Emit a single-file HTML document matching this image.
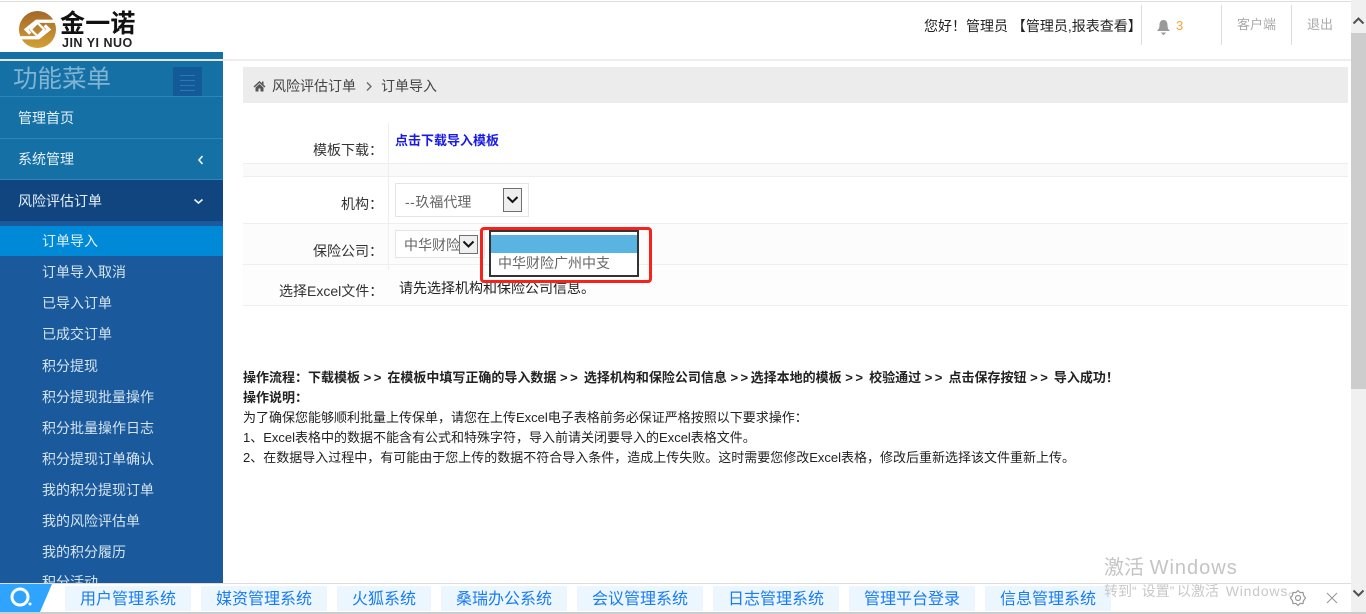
<!DOCTYPE html>
<html lang="zh"><head><meta charset="utf-8"><title>订单导入</title>
<style>
html,body{margin:0;padding:0;width:1366px;height:614px;overflow:hidden;background:#fff}
body{position:relative;font-family:"Liberation Sans","Noto Sans CJK SC",sans-serif;font-size:14px;color:#222}
.a{position:absolute;white-space:nowrap}
.t{position:absolute;white-space:nowrap;line-height:20px}
.m{position:absolute;left:18px;color:#e6f2fa;line-height:20px;white-space:nowrap}
.s{position:absolute;left:42px;color:#d5e4f1;line-height:20px;white-space:nowrap}
.l{position:absolute;background:#eee}
.tab{position:absolute;top:586px;height:25px;background:#ecf6ff;color:#1a7cf0;font-size:16px;line-height:28px;text-align:center;white-space:nowrap;overflow:hidden}
.d{font-size:13px;color:#222;left:243px;line-height:20px;position:absolute;white-space:nowrap}
.g{letter-spacing:2.500px}
.x{letter-spacing:.5px}
.sel{position:absolute;border:1px solid #e5e5e5;background:#fff;color:#666;line-height:20px;white-space:nowrap;box-sizing:border-box}
.btn{position:absolute;box-sizing:border-box;border:1px solid #707070;background:#efefef}
</style></head><body>
<div class="l" style="left:0;top:1px;width:1366px;height:1px;background:#ddd"></div>
<!-- logo -->
<svg class="a" style="left:19px;top:11px" width="37" height="37" viewBox="0 0 36 36">
<defs><linearGradient id="lg" x1="0" y1="0" x2="0" y2="1"><stop offset="0" stop-color="#a4672a"/><stop offset="1" stop-color="#d3a035"/></linearGradient></defs>
<circle cx="18" cy="18" r="18" fill="url(#lg)"/>
<path d="M36 10H17L7 18L11 22" fill="none" stroke="#fff" stroke-width="3.200"/>
<path d="M0 26H19L29 18L25 14" fill="none" stroke="#fff" stroke-width="3.200"/>
<path d="M18 11.500L24.500 18L18 24.500L11.500 18Z" fill="none" stroke="#fff" stroke-width="2.200"/>
<path d="M18 15.500L20.500 18L18 20.500L15.500 18Z" fill="#bb8430"/>
</svg>
<div class="a" style="left:60px;top:6px;font-size:25px;font-weight:700;color:#111;line-height:36px;letter-spacing:.2px">金一诺</div>
<div class="a" style="left:62px;top:37px;font-size:12.500px;font-weight:700;color:#222;line-height:12px;letter-spacing:.5px">JIN YI NUO</div>
<!-- header right -->
<div class="t" style="left:924px;top:16px;font-size:14px;color:#222">您好！管理员 【管理员,报表查看】</div>
<div class="l" style="left:1141px;top:5px;width:1px;height:40px;background:#ddd"></div>
<div class="l" style="left:1221px;top:5px;width:1px;height:40px;background:#ddd"></div>
<div class="l" style="left:1291px;top:5px;width:1px;height:40px;background:#ddd"></div>
<svg class="a" style="left:1156px;top:19px" width="15" height="17" viewBox="0 0 15 17"><path d="M7.500 1C4.500 1 3.500 3.500 3.500 6C3.500 9 2.500 10.500 1 12H14C12.500 10.500 11.500 9 11.500 6C11.500 3.500 10.500 1 7.500 1Z" fill="#999"/><path d="M6 14H9L7.500 15.500Z" fill="#999" stroke="#999"/></svg>
<div class="t" style="left:1176px;top:16px;color:#f9a23b;font-size:13px">3</div>
<div class="t" style="left:1237px;top:15px;color:#aaa;font-size:13px">客户端</div>
<div class="t" style="left:1307px;top:15px;color:#aaa;font-size:13px">退出</div>
<div class="l" style="left:223px;top:59px;width:1128px;height:2px;background:#eee"></div>
<!-- sidebar -->
<div class="a" style="left:0;top:52px;width:223px;height:7px;background:#1570a6"></div>
<div class="a" style="left:0;top:59px;width:223px;height:2px;background:#e8e8e8"></div>
<div class="a" style="left:0;top:61px;width:223px;height:118px;background:#1570a6"></div>
<div class="a" style="left:13px;top:62px;font-size:24.500px;line-height:36px;color:#7fb4d2">功能菜单</div>
<div class="a" style="left:173px;top:67px;width:29px;height:29px;background:#125a98"></div>
<div class="a" style="left:180px;top:75px;width:15px;height:1px;background:#2a78b4;box-shadow:0 5px 0 #2a78b4,0 10px 0 #2a78b4,0 15px 0 #2a78b4"></div>
<div class="a" style="left:0;top:96px;width:223px;height:1px;background:#2a86bd"></div>
<div class="m" style="top:108px">管理首页</div>
<div class="a" style="left:0;top:138px;width:223px;height:1px;background:#2a86bd"></div>
<div class="m" style="top:149px">系统管理</div>
<svg class="a" style="left:196px;top:154px" width="9" height="12" viewBox="0 0 9 12"><path d="M6.500 2L3 6L6.500 10" fill="none" stroke="#e8f2f8" stroke-width="1.700"/></svg>
<div class="a" style="left:0;top:179px;width:223px;height:1px;background:#2a86bd"></div>
<div class="a" style="left:0;top:180px;width:223px;height:41px;background:#10457f"></div>
<div class="m" style="top:191px">风险评估订单</div>
<svg class="a" style="left:192px;top:197px" width="13" height="9" viewBox="0 0 13 9"><path d="M2.500 2.500L6.500 6L10.500 2.500" fill="none" stroke="#e8f2f8" stroke-width="1.700"/></svg>
<div class="a" style="left:0;top:221px;width:223px;height:362px;background:#1a5a9c"></div>
<div class="a" style="left:0;top:226px;width:223px;height:30px;background:#0089d6"></div>
<div class="s" style="top:231px;color:#e0f0fa">订单导入</div>
<div class="s" style="top:262px">订单导入取消</div>
<div class="s" style="top:293px">已导入订单</div>
<div class="s" style="top:324px">已成交订单</div>
<div class="s" style="top:356px">积分提现</div>
<div class="s" style="top:387px">积分提现批量操作</div>
<div class="s" style="top:418px">积分批量操作日志</div>
<div class="s" style="top:449px">积分提现订单确认</div>
<div class="s" style="top:480px">我的积分提现订单</div>
<div class="s" style="top:511px">我的风险评估单</div>
<div class="s" style="top:542px">我的积分履历</div>
<div class="s" style="top:572px">积分活动</div>
<!-- breadcrumb -->
<div class="a" style="left:243px;top:67px;width:1105px;height:36px;background:#ececec"></div>
<svg class="a" style="left:253px;top:80px" width="13" height="12" viewBox="0 0 13 12"><path d="M6.500 1L0.500 6.500L1.500 7.500L6.500 3L11.500 7.500L12.500 6.500L10.500 4.700V1.500H9V3.300Z M2.500 7.500V11.500H5.500V8.500H7.500V11.500H10.500V7.500L6.500 4Z" fill="#555"/></svg>
<div class="t" style="left:272px;top:76px;color:#444;font-size:14px">风险评估订单</div>
<svg class="a" style="left:365px;top:81px" width="8" height="11" viewBox="0 0 8 11"><path d="M2 1.500L6 5.500L2 9.500" fill="none" stroke="#666" stroke-width="1.300"/></svg>
<div class="t" style="left:381px;top:76px;color:#444;font-size:14px">订单导入</div>
<!-- form -->
<div class="l" style="left:243px;top:163px;width:1105px;height:1px"></div>
<div class="a" style="left:243px;top:164px;width:1105px;height:12px;background:#fafafa"></div>
<div class="l" style="left:243px;top:176px;width:1105px;height:1px"></div>
<div class="a" style="left:243px;top:224px;width:1105px;height:40px;background:#fcfcfc"></div>
<div class="l" style="left:243px;top:223px;width:1105px;height:1px"></div>
<div class="l" style="left:243px;top:264px;width:1105px;height:1px"></div>
<div class="a" style="left:243px;top:265px;width:1105px;height:40px;background:#fdfdfd"></div>
<div class="l" style="left:243px;top:305px;width:1105px;height:1px"></div>
<div class="l" style="left:388px;top:123px;width:1px;height:147px"></div>
<div class="t" style="left:313px;top:140px;font-size:14px;color:#333">模板下载：</div>
<div class="t" style="left:395px;top:131px;font-size:13px;font-weight:700;color:#1a1ae6">点击下载导入模板</div>
<div class="t" style="left:341px;top:194px;font-size:14px;color:#333">机构：</div>
<div class="sel" style="left:395px;top:183px;width:134px;height:34px;padding:8px 0 0 9px;font-size:14px"><span class="x">--</span>玖福代理</div>
<div class="btn" style="left:503px;top:188px;width:19px;height:24px"></div>
<svg class="a" style="left:505px;top:195px" width="15" height="10" viewBox="0 0 15 10"><path d="M2.500 2L7.500 7L12.500 2" fill="none" stroke="#111" stroke-width="2"/></svg>
<div class="t" style="left:313px;top:241px;font-size:14px;color:#333">保险公司：</div>
<div class="sel" style="left:395px;top:230px;width:90px;height:28px;padding:4px 0 0 8px;font-size:14px;overflow:hidden">中华财险</div>
<div class="btn" style="left:459px;top:235px;width:19px;height:19px"></div>
<svg class="a" style="left:461px;top:240px" width="15" height="10" viewBox="0 0 15 10"><path d="M2.500 1.500L7.500 6.500L12.500 1.500" fill="none" stroke="#111" stroke-width="2"/></svg>
<div class="t" style="left:279px;top:281px;font-size:14px;color:#333">选择Excel文件：</div>
<div class="t" style="left:399px;top:278px;font-size:14px;color:#222">请先选择机构和保险公司信息。</div>
<!-- dropdown -->
<div class="a" style="left:480px;top:227px;width:172px;height:56px;box-sizing:border-box;border:3px solid #f5231c;border-radius:4px"></div>
<div class="a" style="left:489px;top:230px;width:150px;height:47px;box-sizing:border-box;border:2px solid #333;background:#fff"></div>
<div class="a" style="left:491px;top:235px;width:146px;height:18px;background:#5ab4e2"></div>
<div class="t" style="left:498px;top:253px;font-size:14px;color:#666">中华财险广州中支</div>
<!-- instructions -->
<div class="d" style="top:368px;font-weight:700">操作流程：下载模板 <span class="g">&gt;&gt;</span> 在模板中填写正确的导入数据 <span class="g">&gt;&gt;</span> 选择机构和保险公司信息 <span class="g">&gt;&gt;</span>选择本地的模板 <span class="g">&gt;&gt;</span> 校验通过 <span class="g">&gt;&gt;</span> 点击保存按钮 <span class="g">&gt;&gt;</span> 导入成功！</div>
<div class="d" style="top:388px;font-weight:700">操作说明：</div>
<div class="d" style="top:408px">为了确保您能够顺利批量上传保单，请您在上传Excel电子表格前务必保证严格按照以下要求操作：</div>
<div class="d" style="top:428px">1、Excel表格中的数据不能含有公式和特殊字符，导入前请关闭要导入的Excel表格文件。</div>
<div class="d" style="top:448px">2、在数据导入过程中，有可能由于您上传的数据不符合导入条件，造成上传失败。这时需要您修改Excel表格，修改后重新选择该文件重新上传。</div>
<!-- scrollbar -->
<div class="a" style="left:1351px;top:0;width:15px;height:614px;background:#f0f0f0"></div>
<div class="a" style="left:1351px;top:33px;width:15px;height:356px;background:#cdcdcd"></div>
<svg class="a" style="left:1352px;top:16px" width="13" height="10" viewBox="0 0 13 10"><path d="M1.500 7.500L6.500 2.500L11.500 7.500" fill="none" stroke="#505050" stroke-width="2"/></svg>
<svg class="a" style="left:1352px;top:588px" width="13" height="10" viewBox="0 0 13 10"><path d="M1.500 2.500L6.500 7.500L11.500 2.500" fill="none" stroke="#505050" stroke-width="2"/></svg>
<!-- bottom bar -->
<div class="a" style="left:0;top:583px;width:1351px;height:30px;background:#fff"></div>
<div class="l" style="left:0;top:583px;width:1351px;height:1px;background:#ddd"></div>
<div class="l" style="left:0;top:612px;width:1366px;height:2px;background:#ccc"></div>
<svg class="a" style="left:0;top:584px" width="52" height="28" viewBox="0 0 52 28"><path d="M0 0H52L40 28H0Z" fill="#2ea4ff"/><circle cx="20" cy="13" r="8" fill="none" stroke="#fff" stroke-width="3"/><circle cx="30" cy="20" r="1.500" fill="#fff"/></svg>
<div class="tab" style="left:65px;width:126px">用户管理系统</div>
<div class="tab" style="left:201px;width:126px">媒资管理系统</div>
<div class="tab" style="left:337px;width:94px">火狐系统</div>
<div class="tab" style="left:441px;width:126px">桑瑞办公系统</div>
<div class="tab" style="left:577px;width:126px">会议管理系统</div>
<div class="tab" style="left:713px;width:126px">日志管理系统</div>
<div class="tab" style="left:849px;width:126px">管理平台登录</div>
<div class="tab" style="left:985px;width:126px">信息管理系统</div>
<!-- watermark -->
<div class="a" style="left:1104px;top:554px;font-size:20px;line-height:28px;color:#c4c4c4">激活 <span style="letter-spacing:1px">Windows</span></div>
<div class="a" style="left:1104px;top:581px;font-size:14px;line-height:20px;color:#c8c8c8">转到<span style="letter-spacing:5px">“</span>设置<span style="letter-spacing:2.500px">”</span>以激活 <span style="letter-spacing:.8px;margin-left:3px">Windows</span>。</div>
<svg class="a" style="left:1289px;top:589px" width="18" height="18" viewBox="0 0 18 18"><circle cx="9" cy="9" r="2.500" fill="none" stroke="#999" stroke-width="1.200"/><path d="M9 1.500L11 3.500L14 3.500L14.500 6.200L16.500 9L14.500 11.800L14 14.500L11 14.500L9 16.500L7 14.500L4 14.500L3.500 11.800L1.500 9L3.500 6.200L4 3.500L7 3.500Z" fill="none" stroke="#999" stroke-width="1.200"/></svg>
<svg class="a" style="left:1326px;top:592px" width="12" height="12" viewBox="0 0 12 12"><path d="M1 1L11 11M11 1L1 11" stroke="#999" stroke-width="1.100"/></svg>
</body></html>
